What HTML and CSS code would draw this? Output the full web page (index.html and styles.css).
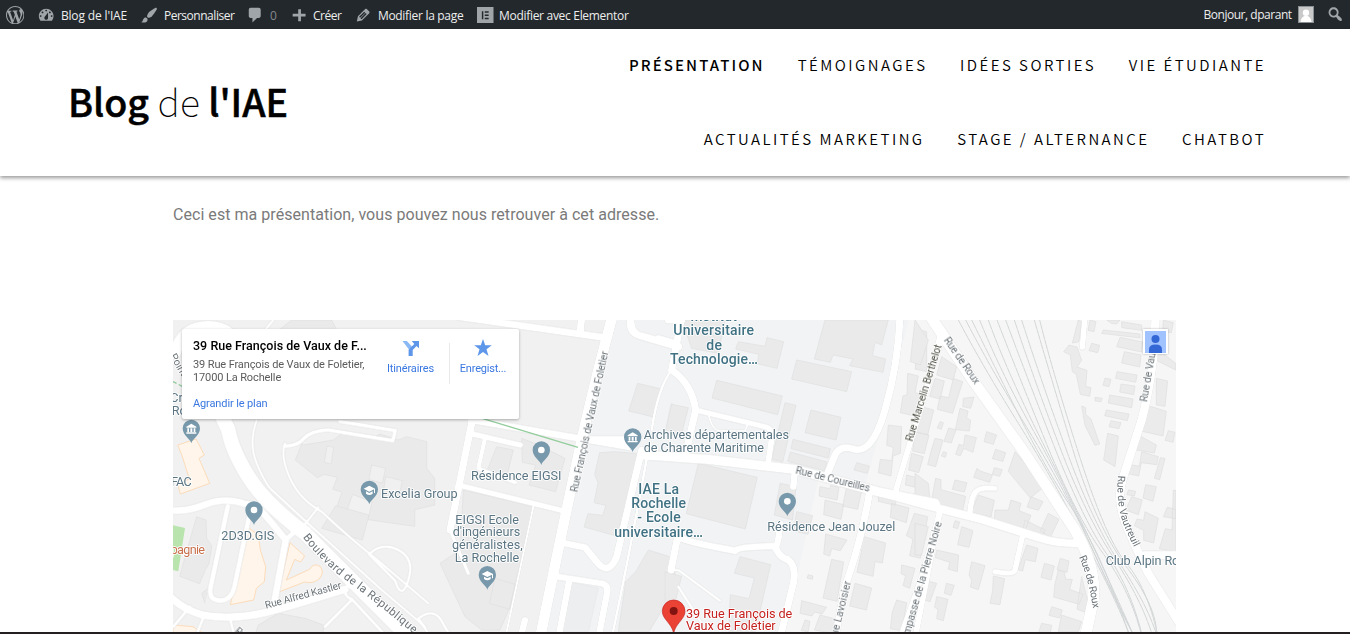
FILE: index.html
```html
<!DOCTYPE html>
<html lang="fr">
<head>
<meta charset="utf-8">
<title>Blog de l'IAE</title>
<link rel="stylesheet" href="styles.css">
</head>
<body>
<div class="adminbar">
  <div class="ab-left">
    <a class="ab-item"><svg class="ico wp" viewBox="0 0 20 20"><path d="M20 10c0-5.51-4.49-10-10-10C4.48 0 0 4.49 0 10c0 5.52 4.48 10 10 10 5.51 0 10-4.48 10-10zM7.78 15.37L4.37 6.22c.55-.02 1.17-.08 1.17-.08.5-.06.44-1.13-.06-1.11 0 0-1.45.11-2.37.11-.18 0-.37 0-.58-.01C4.12 2.69 6.87 1.11 10 1.11c2.33 0 4.45.87 6.05 2.34-.68-.11-1.65.39-1.65 1.58 0 .74.45 1.36.9 2.1.35.61.55 1.36.55 2.46 0 1.49-1.4 5-1.4 5l-3.03-8.37c.54-.02.82-.17.82-.17.5-.05.44-1.25-.06-1.22 0 0-1.44.12-2.38.12-.87 0-2.33-.12-2.33-.12-.5-.03-.56 1.2-.06 1.22l.92.08 1.26 3.41zM17.41 10c.24-.64.74-1.87.43-4.25.7 1.29 1.05 2.71 1.05 4.25 0 3.29-1.73 6.24-4.4 7.78.97-2.59 1.94-5.2 2.92-7.78zM6.1 18.09C3.12 16.65 1.11 13.53 1.11 10c0-1.3.23-2.48.72-3.59C3.25 10.3 4.67 14.2 6.1 18.09zm4.03-6.63l2.58 6.98c-.86.29-1.76.45-2.71.45-.79 0-1.57-.11-2.29-.33.81-2.38 1.62-4.74 2.42-7.1z"/></svg></a>
    <a class="ab-item"><svg class="ico" viewBox="0 0 20 20"><path d="M3.76 16h12.48c1.1-1.37 1.76-3.11 1.76-5 0-4.42-3.58-8-8-8s-8 3.58-8 8c0 1.89.66 3.63 1.76 5zM10 4c.55 0 1 .45 1 1s-.45 1-1 1-1-.45-1-1 .45-1 1-1zM6 6c.55 0 1 .45 1 1s-.45 1-1 1-1-.45-1-1 .45-1 1-1zm8 0c.55 0 1 .45 1 1s-.45 1-1 1-1-.45-1-1 .45-1 1-1zm-5.37 5.55L12 7v6c0 1.1-.9 2-2 2s-2-.9-2-2c0-.57.24-1.08.63-1.45zM4 10c.55 0 1 .45 1 1s-.45 1-1 1-1-.45-1-1 .45-1 1-1zm12 0c.55 0 1 .45 1 1s-.45 1-1 1-1-.45-1-1 .45-1 1-1z"/></svg><span>Blog de l'IAE</span></a>
    <a class="ab-item tight"><svg class="ico" viewBox="0 0 20 20"><path d="M18.33 3.57s.27-.8-.31-1.36c-.53-.52-1.22-.24-1.22-.24-.61.3-5.76 3.47-7.67 5.57-.86.96-2.06 3.79-1.09 4.82.92.98 3.96-.17 4.79-1 2.06-2.06 5.21-7.17 5.5-7.79zM1.4 17.65c2.37-1.56 1.46-3.41 3.23-4.64.93-.65 2.22-.62 3.08.29.63.67.8 2.57-.16 3.46-1.57 1.45-4 1.55-6.15.89z"/></svg><span>Personnaliser</span></a>
    <a class="ab-item"><svg class="ico chat" viewBox="0 0 20 20"><path d="M5 2h9c1.1 0 2 .9 2 2v7c0 1.1-.9 2-2 2h-2l-5 5v-5H5c-1.1 0-2-.9-2-2V4c0-1.1.9-2 2-2z"/></svg><span class="dim">0</span></a>
    <a class="ab-item tight"><svg class="ico" viewBox="0 0 20 20"><path d="M18 8.500v3h-5v5H10v-5H4v-3h6v-5h3v5z"/></svg><span>Créer</span></a>
    <a class="ab-item semi"><svg class="ico" viewBox="0 0 20 20"><path d="M13.890 3.390l2.710 2.720c.46.46.42 1.240.03 1.640l-8.010 8.020-5.560 1.160 1.160-5.580s7.600-7.630 7.990-8.030c.39-.39 1.220-.39 1.680.07zm-2.730 2.790l-5.590 5.610 1.110 1.110 5.540-5.650zm-2.970 8.230l5.580-5.600-1.070-1.080-5.590 5.600z"/></svg><span>Modifier la page</span></a>
    <a class="ab-item semi"><svg class="ico el" viewBox="0 0 17 17"><path fill-rule="evenodd" d="M0 0h17v17H0zM5 4.500v8h1.500v-8zM8 4.500v1.500h4V4.500zM8 7.750v1.500h4v-1.500zM8 11v1.500h4V11z"/></svg><span>Modifier avec Elementor</span></a>
  </div>
  <div class="ab-right tight">
    <span>Bonjour, dparant</span>
    <svg class="avatar" viewBox="0 0 16 17"><path fill="#8b9094" d="M0 0h16v17H0z"/><path fill="#c9c9c9" d="M1 1h14v15H1z"/><circle cx="8" cy="6.700" r="3.200" fill="#fff"/><path fill="#fff" d="M2.500 16c.3-3.500 2-5.500 4-6h3c2 .5 3.700 2.500 4 6z"/></svg>
    <svg class="ico find" viewBox="0 0 20 20"><path d="M12.140 4.180c1.870 1.870 2.110 4.750.72 6.890.12.1.22.21.36.31.2.16.47.36.81.59.34.24.56.39.66.47.42.31.73.57.94.78.32.32.6.65.84 1 .25.35.44.69.59 1.040.14.35.21.68.18 1-.02.32-.14.59-.36.81s-.49.34-.81.36c-.31.02-.65-.04-.99-.19-.35-.14-.7-.34-1.040-.59-.35-.24-.68-.52-1-.84-.21-.21-.47-.52-.77-.93-.1-.13-.25-.35-.47-.66-.22-.32-.4-.57-.56-.78-.16-.2-.29-.35-.44-.5-2.070 1.090-4.690.76-6.440-.98-2.140-2.150-2.140-5.640 0-7.780 2.150-2.150 5.630-2.150 7.780 0zm-1.410 6.360c1.360-1.370 1.360-3.580 0-4.950-1.370-1.370-3.590-1.370-4.950 0-1.370 1.370-1.370 3.580 0 4.950 1.360 1.370 3.580 1.370 4.950 0z"/></svg>
  </div>
</div>

<header class="site-header">
  <h1 class="brand"><b>Blog</b> <span>de</span> <b>l'IAE</b></h1>
  <nav class="menu">
    <div class="menu-row"><a class="current">PRÉSENTATION</a><a>TÉMOIGNAGES</a><a>IDÉES SORTIES</a><a>VIE ÉTUDIANTE</a></div>
    <div class="menu-row"><a>ACTUALITÉS MARKETING</a><a>STAGE / ALTERNANCE</a><a>CHATBOT</a></div>
  </nav>
</header>

<main class="content">
  <p class="intro">Ceci est ma présentation, vous pouvez nous retrouver à cet adresse.</p>
  <div class="map">
    <svg class="map-canvas" viewBox="0 0 3009 936" preserveAspectRatio="none">
      <defs>
        <path id="drop" d="M0 1c-3-14-26-23-26-45a26 26 0 0 1 52 0C26-22 3-13 0 1z"/>
        <g id="poi-dot"><use href="#drop" class="pin"/><circle cy="-44" r="10" fill="#fff"/></g>
        <g id="poi-school"><use href="#drop" class="pin"/><path fill="#fff" transform="translate(0 3)" d="M-17-49L0-58l17 9v13h-3v-11L0-40zM-10-41l10 5 10-5v7q-10 8-20 0z"/></g>
        <g id="poi-museum"><use href="#drop" class="pin"/><path fill="#fff" transform="translate(0 2)" d="M-15-51L0-60l15 9v3h-30zM-12-46h5v11h-5zM-3-46h6v11h-6zM7-46h5v11H7zM-15-34h30v4h-30z"/></g>
        <path id="t-blvd" d="M389 652Q450 732 530 789T800 1007"/>
        <path id="t-vaut" d="M2835 466Q2829 550 2849 605T2925 760"/>
        <path id="t-roux2" d="M2718 711Q2746 775 2760 865L2765 930"/>
      </defs>
      <rect width="3009" height="936" fill="#f1f1f1"/>
      <path fill="#f6f6f6" d="M2206 0L2116 350 2076 495 1936 475 1906 610 1836 940H3009V0z"/>
      <path fill="#f1f3f5" d="M1326 0H2206L2116 350 2076 495 1936 475 1906 610 1836 940H1110z"/>

      <g class="bld" transform="translate(-24 -30)">
        <path d="M415 405l90-15 30-22 80 20 30-16 55 18 25-10 60 15v80l24 30v80l-60 14 0 50-140-20 12-52-58-24-22 62-30-11 20-58-28-8 14-36-40-9-20 10-66-53 20-50z"/>
        <path class="court" d="M486 408l20 4-8 50-20-5zM620 465l42 10-10 44-40-10zM662 500l50 12-8 38-48-10z"/>
        <path d="M470 655l42-68 100 28-20 75zM95 620l28 10 2 55 15 22-8 54-12 20-16 40-60-22 34-120zM180 640q-40 100-45 190l-25 20 10 30M340 910l80 15 55 20v30H270l10-30z"/>
        <path d="M380 30l120 0 30 60-200-20z"/>
      </g>
      <g class="shop" transform="translate(-24 -30)">
        <path d="M38 405l55-18 25 48-16 10 32 75-88 32-8-30 35-15-22-70z"/>
        <path d="M240 645l40 30 6 45 16 50-4 45-24 20-8 35-70 14 22-100z"/>
        <path d="M375 698l44 40-12 18-18-8-25 62 70-32q12-22 32-8 14 18-5 38-18 14-42 8l-78 30z"/>
        <path d="M24 945l60 5 40 25H24z"/>
      </g>
      <path fill="#b9e4ae" d="M0 616l36 8-20 130-16-4z"/>

      <g class="bld" transform="translate(726 -30)">
        <path d="M320 385l52 20 78 40-28 100-80-20 20-60-40-8zM145 540l210 50-70 300-30 70H200l-50-40-75-160 60-40zM240 805l60 18-15 75-62-18z"/>
        <path d="M668 220l68 16-20 85-75-18zM600 425l70 6-35 175-38 70-90-25 12-40 44 5 10-30-36-8 12-60-10-25 15-65zM700 720l80 25v60l-18 60-60 100H610l22-150 30-30z"/>
        <path d="M465 815l85 20-30 130h-90zM768 280l20 10v60h-34z" opacity=".5"/>
        <path d="M245 410l50 10-20 80-60-15z"/>
      </g>
      <g class="bld" transform="translate(1476 -30)">
        <path d="M50 30h130l-20 100-80-15zM220 95l80 14 6-26 50 12-20 80-60-14 6-28-70-16zM480 30h190l-20 75-20-8-8 40 40 10-8 40-100-20 10-20-60-12-8 22-48-10zM395 150l165 35-15 60-165-38zM155 211l197 47-14 56-197-50zM20 283l50 10-22 85-48-10zM360 278l33 8-40 170-33-8zM438 300l90 22-15 68-93-22z"/>
        <path d="M384 388l112 28-6 28-112-28zM376 426l110 30-8 26-110-28zM575 458l38 10-6 22-40-10zM100 460l177 42-36 155-177-46zM345 520l48 10-10 100-55-15zM395 605l48 12-14 56-44-10zM225 740l92 24-46 200h-80l5-110 56 12 16-62-60-14zM0 785l50 14-30 120H0z"/>
      </g>
      <g class="house" transform="translate(1476 -30)">
        <path d="M765 60l20 5v120l-35-8zM728 190l32 8-10 50 18 5-18 65-44-10 8-50 12-4zM670 345l40 5-4 80-22 8-6 60-38-10 6-40 34 4 5-40-20-6zM740 430l35 10-14 48-30-8zM725 495l38 10-6 28-36-8zM735 355l40 10-4 40-38-10zM465 530l30 6 2-10 25 6-6 38-54-12zM545 530l45 12-12 56-45-10zM480 570l56 14-8 44-52-14zM482 672l64 18-20 32-26-6-6 22-18-6zM500 748l36 8-20 118-42-10zM580 675l82 24-10 60-22-4-6 44-48-12 14-65-20-6zM570 820l50 14-16 66-50-12zM410 872l75 20-14 20-22-6-8 12-36-8zM465 915l58 15-20 40-55-10zM420 930l15 4-6 32-20-5zM430 794l14 4-2 10-16-4zM640 535l60 15-10 36-50-12zM680 580l52 14-8 44-48-16zM748 610l40 10-12 75-10 50-32-8 10-50-20-10zM710 765l40 10-16 60-20-8 8-30-14-6zM695 870l30 8-14 84-35-6 6-50z"/>
      </g>
      <g class="house" transform="translate(2226 -30)">
        <path d="M0 30l40 60-24 75-30-10zM80 140l45 30-10 40-50-15zM60 205l28 8-12 54-32-8zM115 205l28 10-30 95-46-12 8-40 26 5zM145 265l32-4-10 34-24-5zM135 295l24 8-4 20 12 8-4 32-40-4-14 40-22-5 14-40 20 5zM20 290l36 10-18 75-40-10zM75 335l10 3-6 20-12-4zM0 365l42 10-14 56-35-8zM60 385l24 5-22 80-24-6 10-40zM150 375l34 8-10 44-28-12-10 22-14-4 10-30 14 4zM215 365l30 10-10 28-28-8zM242 418l30 10-8 26-32-8zM85 425l10 3-4 14-12-4zM186 475l10 8 36 12-8 22-48-15zM238 473l24 6-8 20-22-6zM0 490l40 30 5 50-45-10zM62 505l16 4 0 30 74 20-10 48-94-28zM120 510l36 8-8 28-36-8zM300 425l88 105-42 34-66-80zM348 560l36 15-14 26-34-10zM190 555l48 16-10 50-60-14zM240 600l40 0 8-30 30 10-6 22 36 14-16 40-94-22zM330 630l60 30-6 18-60-20zM400 610l32 18-26 54-30-20z"/>
        <path d="M120 632l14 4-6 20-14-4zM140 650l34 12-12 50-34-8zM0 640l40 10-20 85H0zM65 720l66 15-4 50-28-8 6-20-44-14zM170 755l40 12-20 72-24-8 4-20-8-16zM235 798l34 8-14 78-30-4 8-38zM25 810l40 10-20 55-25-8zM94 820l24 6-10 30-20-6zM65 860l34 8-14 64-20-6 4-28-10-6zM335 705l34 10-8 40-30-6-8 34-14-4zM388 760l30 8-10 42-30-8zM436 745l26 8-6 34-30-8zM430 780l18 6 4 22 20 0-8 30 40 15-12 30-76-22 4-40zM500 800l20 80-10 26-24-8zM410 890l32 10-8 24-32-8zM440 915l60 20-10 30h-60zM380 940l30 6-4 24h-36z"/>
        <path d="M490 30l10 5-8 60-20 4zM525 30l18 5-6 30-18-4zM530 100l24 6-6 22-26-6zM462 105l24 6 14 40-14 20 30 10-4 48 16 4-4 26-28-6-12-60-12-8-6-50-20-10zM570 204l18 4-6 22-18-4zM540 262l22 3-4 10-18-2zM500 288l12 5 0 20 16 14 26 75-14 4-30-60zM575 30h40l-10 12-16-2zM620 35l60 10v16l-60-8zM565 60l110 12v12l-115-14zM615 82l68 14-4 30-74-16zM628 125l50 10-4 36-54-12zM606 185l60 10-4 22-60-12zM618 222l42 6-4 26-42-8zM584 255l70 12-4 26-70-14zM574 300l68 12-5 20-68-15zM588 332l30 6-6 18-30-6zM578 370l32 8-10 92-34-20z"/>
        <path d="M745 30l30 8-6 30-26-5zM730 120l52 40v20l-60-30zM724 205l34 8-8 76-26-4zM690 290l20 0 44 14-10 74-62-14zM760 362l20 5-6 30-24-6zM670 375l54 30-6 24-58-10zM680 425l50 15-5 24-46-6-8 40-36-8 12-26 26 5zM750 445l-16 64-16-4 18-62zM692 524l32 6-10 44-30-10zM640 540l22 4-4 14-22-4zM650 560l32 10-12 44-38-14zM690 605l40 20-14 74-30-8 0-30-28-14 8-20 20 4zM757 592l24 6v28l-36-6zM775 540l8 2v184l-50-10 18-60 20 4z"/>
      </g>

      <g class="rail">
        <path d="M2356 0Q2430 140 2530 300T2730 650 2866 936"/>
        <path d="M2378 0Q2450 140 2560 320T2745 660 2877 936"/>
        <path d="M2396 0Q2460 130 2540 290T2700 570 2866 936"/>
        <path d="M2420 0Q2480 150 2580 330T2755 680 2877 936"/>
        <path d="M2446 0Q2500 150 2600 350T2770 700 2877 936"/>
        <path d="M2472 0Q2530 150 2620 370T2790 700 2903 936"/>
        <path d="M2498 0Q2550 140 2640 370T2800 700 2905 936"/>
        <path d="M2524 0Q2580 170 2660 380T2820 710 2935 936"/>
        <path d="M2546 0Q2600 170 2680 390T2840 730 2948 936"/>
        <path d="M2584 0Q2630 160 2700 390T2860 740 2950 936"/>
        <path d="M2600 0Q2640 160 2720 410T2860 730 2952 936"/>
      </g>

      <g class="road">
        <g transform="translate(-24 -30)">
          <path stroke-width="46" d="M130 200Q160 300 190 360 200 420 250 500T420 670L740 990"/>
          <path stroke-width="36" d="M30 130Q50 50 130 50T230 140"/>
          <path stroke-width="8" d="M275 330Q250 400 275 460T320 540L440 650 650 840 780 950M360 400Q345 440 375 505T470 605Q560 690 640 752L790 880M460 592l-38 48M325 30l-50 60"/>
          <path stroke-width="12" d="M358 408q40 2 60-24 20-20 70-24l195 32 8-30-168-28"/>
          <path stroke-width="22" d="M10 600Q60 608 120 584T240 582Q270 580 300 615T362 690L325 890"/>
          <path stroke-width="16" d="M188 590L136 835Q132 872 165 872T208 830L252 620M362 690l30-28"/>
          <path stroke-width="24" d="M10 855Q70 915 150 920T300 908 540 838"/>
          <path stroke-width="10" d="M75 890l-50 60M118 915l-20 50M195 925l12 50M540 835q-4 24 20 32L660 975M560 870l-80 80"/>
          <path stroke-width="9" d="M612 733Q650 695 700 720T730 810 690 812z"/>
        </g>
        <g transform="translate(726 -30)">
          <path stroke-width="32" d="M600 -10Q540 210 500 390T375 985"/>
          <path stroke-width="22" d="M130 20L565 82M500 20l-4 42M170 330L640 410"/>
          <path stroke-width="22" d="M174 320L105 660"/>
          <path stroke-width="10" d="M105 660L160 790"/>
          <path stroke-width="18" d="M130 525L460 606M165 370L315 405"/>
          <path stroke-width="13" d="M210 385l-20 90 110 42"/>
          <path stroke-width="6" d="M355 590L275 965"/>
          <path stroke-width="22" d="M520 388H650M450 700L510 712 545 755Q580 800 605 740L680 420"/>
          <path stroke-width="8" d="M700 420Q650 700 590 985"/>
          <path stroke-width="20" d="M430 800L560 820Q582 826 576 850L550 985M462 815L430 985M330 930l-10 40"/>
          <path stroke-width="24" d="M648 20Q640 70 680 78L790 110"/>
          <path stroke-width="8" d="M10 925Q50 895 75 925L110 985M10 925L50 985"/>
        </g>
        <g transform="translate(1476 -30)">
          <path stroke-width="30" d="M-60 435L130 448 390 478 640 545 810 580"/>
          <path stroke-width="22" d="M50 20L20 180M10 30h40M-20 85L30 100M20 180Q80 220 92 300L60 440"/>
          <path stroke-width="8" d="M20 180Q-20 230 -40 360"/>
          <path stroke-width="18" d="M92 300L300 350Q325 355 320 385L310 455"/>
          <path stroke-width="6" d="M130 310Q140 360 165 362H240L250 340"/>
          <path stroke-width="22" d="M705 20Q700 160 660 300T560 415Q520 405 508 440L488 490"/>
          <path stroke-width="20" d="M390 480L385 530M345 640Q340 710 330 712"/>
          <path stroke-width="22" d="M40 675Q30 690 210 722 220 710 330 708 340 740 370 750 395 770 385 820L345 985M36 690L18 780"/>
          <path stroke-width="8" d="M20 780H40L165 872M40 830L110 940"/>
          <path stroke-width="22" d="M615 540Q590 690 540 830L510 985"/>
          <path stroke-width="18" d="M690 550Q740 380 790 220L830 60M825 600L750 985"/>
        </g>
        <g transform="translate(2226 -30)">
          <path stroke-width="34" d="M40 10L180 220 330 430 480 660Q545 770 535 870L510 985"/>
          <path stroke-width="26" d="M-110 545L20 582 200 628 370 682Q420 700 490 700"/>
          <path stroke-width="17" d="M510 20l-8 92M240 535Q195 530 182 545T165 605M322 680L300 780Q296 796 240 785M75 605L20 800-50 1000M85 70L20 280"/>
          <path stroke-width="26" d="M722 10Q720 180 680 330L625 500Q600 570 640 660T700 790L800 950M690 735H800"/>
        </g>
      </g>
      <path stroke="#93cd9c" stroke-width="4" fill="none" d="M930 296L1215 382"/>
      <path stroke="#93cd9c" stroke-width="4" stroke-dasharray="12 7" fill="none" d="M0 185L40 205"/>

      <g class="lbl street">
        <text font-size="34"><textPath href="#t-blvd" textLength="442">Boulevard de la République</textPath></text>
        <text transform="translate(279 866) rotate(-15)" textLength="236">Rue Alfred Kastler</text>
        <text transform="translate(1212 518) rotate(-77.500)" textLength="432">Rue François de Vaux de Foletier</text>
        <text transform="translate(1866 459) rotate(14)" textLength="229">Rue de Coureilles</text>
        <text class="dark" transform="translate(2217 366) rotate(-73)" textLength="302">Rue Marcelin Berthelot</text>
        <text transform="translate(2312 60) rotate(55)" textLength="164">Rue de Roux</text>
        <text transform="translate(2921 247) rotate(-80)" textLength="160">Rue de Vaut</text>
        <text><textPath href="#t-vaut" textLength="225">Rue de Vautreuil</textPath></text>
        <text><textPath href="#t-roux2" textLength="161">Rue de Roux</textPath></text>
        <text transform="translate(2207 954) rotate(-74)" textLength="360">Impasse de la Pierre Noire</text>
        <text transform="translate(1988 968) rotate(-76)" textLength="188">Rue Lavoisier</text>
        <text transform="translate(-10 108) rotate(60)">Point</text>
        <text transform="translate(-12 28) rotate(-75)">r</text>
        <text transform="translate(183 936) rotate(40)">Rue</text>
      </g>
      <g class="lbl">
        <text x="-8" y="246">Cr</text><text x="-4" y="284">Ro</text>
        <text x="-6" y="498" textLength="62">FAC</text>
        <text x="145" y="660" textLength="159">2D3D.GIS</text>
        <text class="food" x="-79" y="701" textLength="175">Campagnie</text>
        <text x="624" y="533" textLength="230">Excelia Group</text>
        <text x="894" y="479" textLength="271">Résidence EIGSI</text>
        <text x="847" y="612" textLength="191">EIGSI Ecole</text>
        <text x="839" y="649" textLength="203">d'ingénieurs</text>
        <text x="837" y="687" textLength="212">généralistes,</text>
        <text x="845" y="725" textLength="194">La Rochelle</text>
        <text x="1412" y="358" textLength="436">Archives départementales</text>
        <text x="1412" y="396" textLength="361">de Charente Maritime</text>
        <text x="1783" y="632" textLength="384">Résidence Jean Jouzel</text>
        <text x="2798" y="736" textLength="221">Club Alpin Ro</text>
      </g>
      <g class="lbl campus">
        <text x="1552" y="4" textLength="140">Institut</text>
        <text x="1501" y="46" textLength="242">Universitaire</text>
        <text x="1600" y="90" textLength="47">de</text>
        <text x="1491" y="133" textLength="264">Technologie…</text>
        <text x="1396" y="521" textLength="122">IAE La</text>
        <text x="1375" y="564" textLength="164">Rochelle</text>
        <text x="1393" y="607" textLength="130">- Ecole</text>
        <text x="1324" y="650" textLength="266">universitaire…</text>
      </g>
      <g class="lbl here">
        <text x="1539" y="893" textLength="319">39 Rue François de</text>
        <text x="1539" y="931" textLength="269">Vaux de Foletier</text>
      </g>
      <use href="#poi-museum" x="55" y="369"/>
      <use href="#poi-dot" x="243" y="614"/>
      <use href="#poi-school" x="589" y="552"/>
      <use href="#poi-dot" x="1105" y="434"/>
      <use href="#poi-school" x="943" y="808"/>
      <use href="#poi-museum" x="1379" y="395"/>
      <use href="#poi-dot" x="1843" y="588"/>
      <path fill="#ea4335" stroke="#c5221f" stroke-width="2" d="M1502 940c-5-30-34-42-34-66a34 34 0 0 1 68 0c0 24-29 36-34 66z"/>
      <circle cx="1502" cy="873" r="12" fill="#811411"/>
    </svg>
    <section class="place">
      <div class="place-info">
        <h2>39 Rue François de Vaux de F...</h2>
        <p>39 Rue François de Vaux de Foletier,<br>17000 La Rochelle</p>
        <a>Agrandir le plan</a>
      </div>
      <div class="action itin">
        <svg viewBox="0 0 18 18"><path fill="#8ab8f5" d="M.5 2h4.300L9 6.500 11 9 6.600 10z"/><path fill="#5e97ea" d="M6.600 17v-6.500L12.300 5l-2.500-3h7.200v7.200L14.500 7l-3.800 4v6z"/></svg>
        <span>Itinéraires</span>
      </div>
      <div class="action save">
        <svg viewBox="0 0 18 18"><path fill="#5e97ea" d="M9 0l2.200 6.300h6.600l-5.300 4 2 6.700L9 13l-5.500 4 2-6.700-5.300-4h6.600z"/></svg>
        <span>Enregist...</span>
      </div>
    </section>
    <div class="profile"><svg viewBox="0 0 21 22"><path fill="#a0c2ff" d="M0 0h21v22H0z"/><circle cx="10.500" cy="8" r="4" fill="#3367d6"/><path fill="#3367d6" d="M4 22v-3.500q0-5 6.500-5t6.500 5V22z"/></svg></div>
  </div>
</main>
<div class="edge"></div>
</body>
</html>
```

FILE: styles.css
```css
* { box-sizing: border-box; }
body { margin: 0; width: 1350px; height: 634px; overflow: hidden; background: #fff; font-family: Roboto, sans-serif; display: flex; flex-direction: column; }

.adminbar { height: 29px; flex: none; background: #23282d; color: #eee; display: flex; justify-content: space-between; font: 12px/29px "Open Sans", sans-serif; letter-spacing: -.15px; white-space: nowrap; }
.ab-left { display: grid; grid-template-columns: 31px 103px 106px 43px 65px 123px 160px; padding-left: 6px; }
.ab-item { display: flex; align-items: center; gap: 5.500px; }
.ab-item span { padding-top: 1px; }
.tight { letter-spacing: -.47px; }
.semi { letter-spacing: -.3px; }
.ab-right { display: flex; align-items: center; padding-right: 6px; }
.ico { width: 18.400px; height: 18.400px; flex: none; fill: #a0a5aa; }
.ico.el { width: 16.500px; height: 16.500px; }
.dim { color: #83888d; }
.avatar { width: 16px; height: 17px; margin: 0 12px 0 6px; }

.site-header { height: 147px; flex: none; display: flex; justify-content: space-between; padding: 0 84px 0 68px; background: #fff; box-shadow: 0 2px 4px rgba(0, 0, 0, .4); font-family: "Noto Sans CJK SC", sans-serif; color: #000; position: relative; }
.brand { margin: 0; font-size: 37.600px; line-height: 144px; font-weight: 500; white-space: nowrap; }
.brand b { font-weight: 500; -webkit-text-stroke: .5px #000; }
.brand span { font-weight: 100; }
.menu { display: flex; flex-direction: column; }
.menu-row { display: flex; justify-content: flex-end; gap: 32.600px; height: 74px; line-height: 72px; font-size: 15px; letter-spacing: 2.450px; white-space: nowrap; font-weight: 350; }
.menu .current { font-weight: 500; letter-spacing: 2.100px; margin-right: .4px; }

.content { padding: 0 174px 0 173px; flex: none; }
.intro { margin: 28px 0 95px; font-size: 16px; line-height: 21px; letter-spacing: .046px; color: #7a7a7a; }
.map { position: relative; width: 1003px; height: 312px; overflow: hidden; }
.map-canvas { display: block; width: 1003px; height: 312px; }
.bld path { fill: #eaeaea; stroke: #dfdfdf; stroke-width: 2; }
.bld .court { fill: #f0f0f0; }
.house path { fill: #ebebeb; stroke: #dedede; stroke-width: 2; }
.shop path { fill: #fff5ea; stroke: #fcdcba; stroke-width: 3; }
.rail path { fill: none; stroke: #d3d6d7; stroke-width: 3; stroke-dasharray: 30 1; }
.road { fill: none; stroke: #fff; stroke-linecap: round; stroke-linejoin: round; filter: drop-shadow(0 0 2px #c8c8c8); }
.pin { fill: #7899ab; }
.lbl { font-family: Roboto, sans-serif; font-size: 38px; fill: #5b7583; stroke: #fff; stroke-width: 5px; paint-order: stroke; stroke-linejoin: round; }
.street { font-size: 31px; fill: #6b7378; }
.dark { fill: #4f4f45; }
.food { fill: #c8704c; }
.campus { font-size: 42px; font-weight: 500; fill: #417284; }
.here { fill: #c5221f; }

.place { position: absolute; left: 9px; top: 9px; width: 337px; height: 90px; background: #fff; border-radius: 2px; box-shadow: 0 1px 3px rgba(0, 0, 0, .3); display: flex; font-size: 11px; line-height: 13px; letter-spacing: -.12px; }
.place-info { width: 195px; padding: 9px 0 0 11px; white-space: nowrap; }
.place h2 { margin: 0; font-size: 12.500px; line-height: 15px; font-weight: 500; letter-spacing: .02px; color: #000; }
.place p { margin: 5px 0 13px; color: #5b5b5b; }
.place a, .action { color: #3a78e0; }
.action { width: 67px; display: flex; flex-direction: column; align-items: center; padding-top: 10px; }
.action svg { width: 18px; height: 18px; margin-bottom: 5px; }
.save { border-left: 1px solid #e8e8e8; margin: 14px 0 35px 5px; padding-top: 0; letter-spacing: -.2px; }
.save svg { margin-top: -4px; flex: none; }
.profile { position: absolute; left: 969.500px; top: 9px; width: 25px; height: 25px; padding: 1.500px 2px; background: #fff; box-shadow: 0 0 2px rgba(0, 0, 0, .3); }
.profile svg { display: block; width: 21px; height: 22px; }
.edge { height: 2px; flex: none; background: #231f20; }
```
